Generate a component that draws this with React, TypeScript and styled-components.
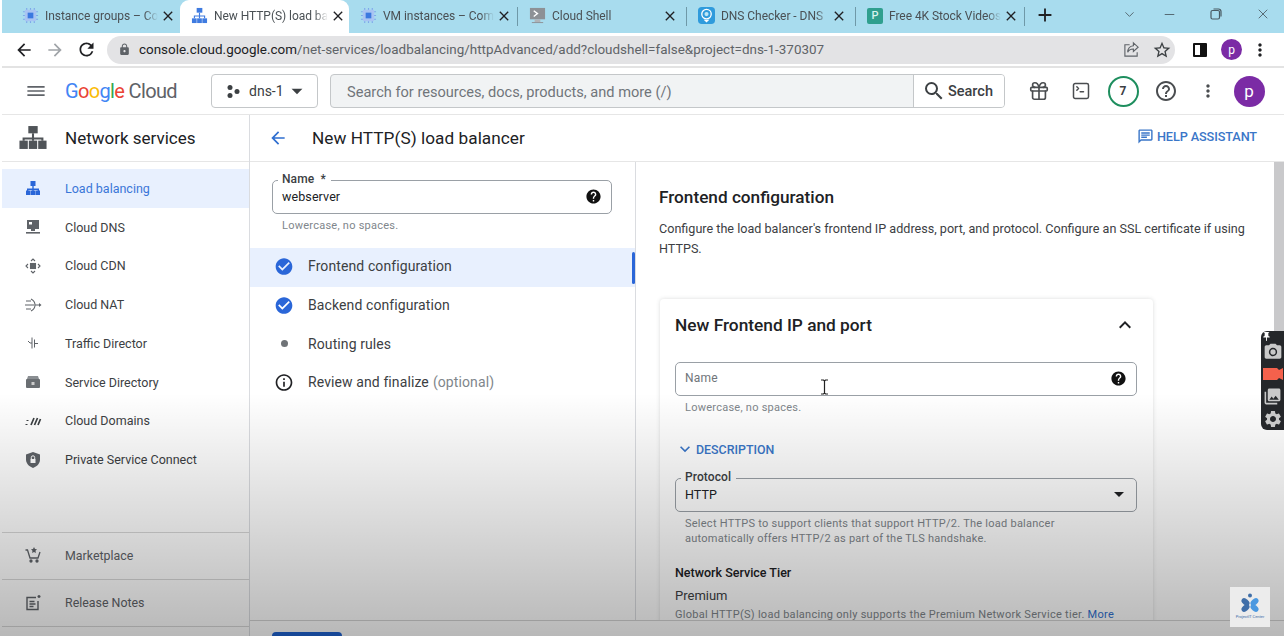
import { ReactNode } from "react";
import styled, { createGlobalStyle } from "styled-components";
import {
  MdMenu,
  MdArrowBack,
  MdArrowForward,
  MdRefresh,
  MdLock,
  MdStarBorder,
  MdMoreVert,
  MdSearch,
  MdHelpOutline,
  MdHelp,
  MdCheckCircle,
  MdInfoOutline,
  MdExpandLess,
  MdExpandMore,
  MdArrowDropDown,
  MdOutlineChat,
  MdClose,
  MdAdd,
  MdPushPin,
  MdCameraAlt,
  MdPhotoLibrary,
  MdSettings,
} from "react-icons/md";
import { Gift, SquareTerminal, ChevronDown, Minus, X } from "lucide-react";

const GlobalStyle = createGlobalStyle`
  html, body {
    margin: 0;
    padding: 0;
    background: #fff;
    font-family: Roboto, "Liberation Sans", sans-serif;
    overflow: hidden;
  }
  * { box-sizing: border-box; }
`;

const Page = styled.div`
  position: relative;
  width: 1284px;
  height: 636px;
  padding-left: 2px;
  overflow: hidden;
  background: #fff;
  color: #202124;
`;

const TabStrip = styled.div`
  display: flex;
  align-items: flex-end;
  height: 33px;
  padding-left: 9px;
  background: #a8dcee;
  color: #4a5054;
`;

const Tab = styled.div<{ $active?: boolean; $sep?: boolean }>`
  position: relative;
  display: flex;
  align-items: center;
  width: 169px;
  height: 33px;
  padding: 0 9px 2px 11px;
  background: ${(p) => (p.$active ? "#fff" : "transparent")};
  border-radius: 9px 9px 0 0;
  &::after {
    content: "";
    display: ${(p) => (p.$sep ? "block" : "none")};
    position: absolute;
    right: 0;
    top: 7px;
    height: 19px;
    width: 1px;
    background: #6f99a8;
  }
`;

const TabFavicon = styled.svg`
  flex: none;
  width: 17px;
  height: 17px;
`;

const TabTitle = styled.span`
  flex: 1;
  margin-left: 6px;
  font-size: 12px;
  letter-spacing: -0.05px;
  white-space: nowrap;
  -webkit-mask-image: linear-gradient(90deg, #000 88%, transparent 100%);
  mask-image: linear-gradient(90deg, #000 88%, transparent 100%);
`;

const TabClose = styled(MdClose)`
  flex: none;
  margin-left: 2px;
  width: 16px;
  height: 16px;
  color: #202124;
`;

const NewTab = styled(MdAdd)`
  margin: 0 0 3px 9px;
  width: 22px;
  height: 22px;
  color: #202124;
  flex: none;
  align-self: center;
`;

const WindowControls = styled.div`
  display: flex;
  align-items: center;
  gap: 33px;
  margin-left: auto;
  margin-right: 13px;
  align-self: flex-start;
  height: 28px;
  color: #4a5a62;
`;

const ChevronControl = styled(ChevronDown)`
  margin-right: -8px;
`;

const RestoreIcon = styled.svg`
  width: 12px;
  height: 12px;
`;

const Toolbar = styled.div`
  display: flex;
  align-items: center;
  height: 35px;
  padding-left: 12px;
  border-bottom: 2px solid #e3e3e3;
  background: #fff;
`;

const NavButtons = styled.div`
  display: flex;
  align-items: center;
  gap: 11px;
  width: 93px;
  flex: none;
  color: #3c4043;
`;

const UrlBar = styled.div`
  display: flex;
  align-items: center;
  flex: none;
  width: 1068px;
  height: 28px;
  padding: 0 3px 0 11px;
  background: #e3e3e5;
  border-radius: 14px;
  color: #5f6368;
`;

const UrlText = styled.span`
  margin-left: 8px;
  font-size: 13.45px;
  color: #5f6368;
  white-space: nowrap;
  b {
    font-weight: 400;
    color: #202124;
  }
`;

const UrlActions = styled.div`
  display: flex;
  align-items: center;
  gap: 12px;
  margin-left: auto;
`;

const ShareIcon = styled.svg`
  width: 17px;
  height: 17px;
`;

const BrowserRight = styled.div`
  display: flex;
  align-items: center;
  gap: 14px;
  margin-left: 18px;
`;

const SidePanelIcon = styled.span`
  display: block;
  width: 14px;
  height: 14px;
  border: 2px solid #111;
  border-right-width: 7px;
  border-radius: 1px;
`;

const MiniAvatar = styled.span`
  display: flex;
  align-items: center;
  justify-content: center;
  width: 21px;
  height: 21px;
  border-radius: 50%;
  background: #7b2ba5;
  color: #fff;
  font-size: 12px;
`;

const BrowserMenu = styled(MdMoreVert)`
  margin-left: -6px;
  color: #202124;
`;

const AppHeader = styled.div`
  display: flex;
  align-items: center;
  height: 47px;
  padding-left: 24px;
  border-bottom: 1px solid #e6e6e6;
`;

const Burger = styled(MdMenu)`
  flex: none;
  width: 20px;
  height: 20px;
  color: #5f6368;
  transform: scaleX(1.15);
`;

const Logo = styled.div`
  display: flex;
  flex: none;
  width: 146px;
  margin-left: 19px;
  font-size: 20px;
  letter-spacing: -0.65px;
  white-space: nowrap;
  color: #5f6368;
`;

const LogoLetter = styled.span<{ $color: string }>`
  color: ${(p) => p.$color};
`;

const ProjectPicker = styled.div`
  display: flex;
  align-items: center;
  flex: none;
  width: 107px;
  height: 34px;
  padding-left: 14px;
  border: 1px solid #c4c7c9;
  border-radius: 4px;
  font-size: 14px;
  color: #3c4043;
`;

const PickerLabel = styled.span`
  margin-left: 8px;
`;

const PickerDots = styled.svg`
  width: 15px;
  height: 15px;
`;

const SearchBox = styled.div`
  display: flex;
  flex: none;
  width: 675px;
  height: 34px;
  margin-left: 12px;
  border: 1px solid #c4c7c9;
  border-radius: 4px;
  background: #f1f3f4;
  overflow: hidden;
`;

const SearchPlaceholder = styled.div`
  flex: 1;
  padding: 1px 0 0 16px;
  font-size: 14.6px;
  line-height: 32px;
  color: #70757a;
`;

const SearchButton = styled.div`
  display: flex;
  align-items: center;
  gap: 2px;
  width: 91px;
  padding-left: 8px;
  background: #fff;
  border-left: 1px solid #c4c7c9;
  font-size: 14.5px;
  font-weight: 500;
  color: #3c4043;
`;

const HeaderIcons = styled.div`
  display: flex;
  align-items: center;
  margin-left: 23px;
  color: #4a4d50;
`;

const IconSlot = styled.div<{ $w: number }>`
  display: flex;
  align-items: center;
  justify-content: center;
  width: ${(p) => p.$w}px;
`;

const Badge = styled.div`
  display: flex;
  flex: none;
  align-items: center;
  justify-content: center;
  width: 31px;
  height: 31px;
  border: 2px solid #1e8e5e;
  border-radius: 50%;
  font-size: 12px;
  font-weight: 700;
  color: #3c4043;
`;

const Avatar = styled.div`
  display: flex;
  align-items: center;
  justify-content: center;
  width: 31px;
  height: 31px;
  border-radius: 50%;
  background: #7b2ba5;
  color: #fff;
  font-size: 17px;
`;

const Body = styled.div`
  display: flex;
  height: 521px;
`;

const Sidebar = styled.aside`
  display: flex;
  flex-direction: column;
  flex: none;
  width: 248px;
  border-right: 1px solid #dadce0;
`;

const SideTitle = styled.div`
  display: flex;
  align-items: center;
  flex: none;
  height: 47px;
  padding: 0 0 1px 17px;
  border-bottom: 1px solid #e6e6e6;
  font-size: 17px;
  color: #202124;
`;

const TitleIcon = styled.svg`
  flex: none;
  width: 28px;
  height: 25px;
  margin-right: 18px;
`;

const SideList = styled.nav`
  padding-top: 7px;
`;

const SideRow = styled.div<{ $active?: boolean }>`
  display: flex;
  align-items: center;
  height: 38.75px;
  padding-left: 22px;
  font-size: 12.5px;
  background: ${(p) => (p.$active ? "#e8f0fe" : "transparent")};
  color: ${(p) => (p.$active ? "#3a76d8" : "#3c4043")};
`;

const SideIcon = styled.svg`
  flex: none;
  width: 18px;
  height: 18px;
  margin-right: 23px;
`;

const SideBottom = styled.div`
  margin-top: auto;
  padding-bottom: 9px;
`;

const BottomRow = styled.div`
  display: flex;
  align-items: center;
  height: 47.5px;
  padding: 0 0 1px 22px;
  border-top: 1px solid #d8d8d8;
  font-size: 12.4px;
  color: #5f6368;
  &:last-child {
    height: 48px;
    border-bottom: 1px solid #d8d8d8;
  }
`;

const Main = styled.main`
  display: flex;
  flex-direction: column;
  flex: 1;
  min-width: 0;
`;

const MainHeader = styled.div`
  display: flex;
  align-items: center;
  flex: none;
  height: 47px;
  padding: 0 27px 1px 18px;
  border-bottom: 1px solid #e6e6e6;
`;

const BackArrow = styled(MdArrowBack)`
  width: 20px;
  height: 20px;
  color: #2f6fd0;
`;

const PageTitle = styled.h1`
  margin: 0 0 0 24px;
  font-size: 17.2px;
  font-weight: 400;
  letter-spacing: 0.05px;
`;

const HelpAssistant = styled.div`
  display: flex;
  align-items: center;
  gap: 3px;
  margin: 0 0 2px auto;
  font-size: 12.7px;
  font-weight: 500;
  letter-spacing: -0.1px;
  color: #3a76c8;
`;

const Columns = styled.div`
  display: flex;
  flex: 1;
  min-height: 0;
  overflow: hidden;
`;

const StepPanel = styled.section`
  flex: none;
  width: 386px;
  padding-top: 18px;
  border-right: 1px solid #dadce0;
`;

const FieldWrap = styled.div<{ $inset?: boolean }>`
  margin: ${(p) => (p.$inset ? "0 22px" : "0")};
  width: ${(p) => (p.$inset ? "340px" : "462px")};
`;

const Field = styled.div`
  position: relative;
  display: flex;
  align-items: center;
  justify-content: space-between;
  height: 34px;
  padding: 0 9px 2px;
  border: 1px solid #9aa0a6;
  border-radius: 5px;
  font-size: 12.5px;
  color: #202124;
  letter-spacing: 0.1px;
`;

const FieldLabel = styled.span`
  position: absolute;
  left: 5px;
  top: -8px;
  padding: 0 5px 0 4px;
  background: #fff;
  font-size: 12px;
  line-height: 13px;
  font-weight: 500;
  color: #3c4043;
`;

const Placeholder = styled.span`
  font-size: 12px;
  color: #70757a;
  letter-spacing: 0.2px;
`;

const HintText = styled.div`
  margin-top: 4px;
  padding-left: 10px;
  font-size: 11px;
  line-height: 15px;
  letter-spacing: 0.25px;
  color: #80868b;
`;

const Steps = styled.div`
  margin-top: 15px;
`;

const StepRow = styled.div<{ $active?: boolean }>`
  position: relative;
  display: flex;
  align-items: center;
  height: 38.7px;
  padding: 0 0 2px 24px;
  font-size: 14px;
  letter-spacing: 0.1px;
  color: #3c4043;
  background: ${(p) => (p.$active ? "#e8f0fe" : "transparent")};
  &::after {
    content: "";
    display: ${(p) => (p.$active ? "block" : "none")};
    position: absolute;
    right: 0;
    top: 4px;
    width: 3px;
    height: 32px;
    border-radius: 2px;
    background: #2a66d8;
  }
`;

const StepIconBox = styled.span`
  display: flex;
  align-items: center;
  justify-content: center;
  flex: none;
  width: 20px;
  margin-right: 14px;
`;

const StepCheck = styled(MdCheckCircle)`
  width: 23px;
  height: 23px;
  color: #2a66d8;
`;

const StepInfo = styled(MdInfoOutline)`
  width: 23px;
  height: 23px;
  color: #202124;
`;

const StepDot = styled.span`
  width: 7px;
  height: 7px;
  border-radius: 50%;
  background: #6f7377;
`;

const Optional = styled.span`
  margin-left: 4px;
  color: #80868b;
`;

const ConfigPanel = styled.section`
  flex: 1;
  padding: 25px 0 0 23px;
`;

const ConfigTitle = styled.h2`
  margin: 0;
  font-size: 17.2px;
  line-height: 20px;
  font-weight: 500;
  color: #202124;
`;

const ConfigText = styled.p`
  width: 600px;
  margin: 12px 0 0;
  font-size: 12.6px;
  line-height: 20px;
  color: #3c4043;
`;

const Card = styled.div`
  width: 493px;
  height: 340px;
  margin: 40px 0 0 1px;
  padding: 0 15px;
  background: #fff;
  border-radius: 4px 4px 0 0;
  box-shadow: 0 0 4px rgba(60, 64, 67, 0.18);
`;

const CardHead = styled.div`
  display: flex;
  align-items: center;
  justify-content: space-between;
  height: 53px;
  margin-bottom: 10px;
  padding: 0 1px 1px 0;
`;

const CardTitle = styled.h3`
  margin: 0;
  font-size: 17.3px;
  font-weight: 500;
  color: #202124;
`;

const CardToggle = styled(MdExpandLess)`
  width: 24px;
  height: 24px;
  color: #202124;
`;

const Disclosure = styled.div`
  display: flex;
  align-items: center;
  gap: 1px;
  margin: 25px 0 0;
  height: 18px;
  font-size: 12.4px;
  font-weight: 500;
  color: #3a76c8;
`;

const FieldGap = styled.div`
  height: 20px;
`;

const DropCaret = styled(MdArrowDropDown)`
  width: 24px;
  height: 24px;
  margin-right: -4px;
  color: #202124;
`;

const TierTitle = styled.div`
  margin-top: 19px;
  font-size: 12.5px;
  line-height: 16px;
  font-weight: 500;
  color: #202124;
`;

const TierValue = styled.div`
  margin-top: 7px;
  font-size: 13px;
  line-height: 16px;
  color: #3c4043;
`;

const TierHint = styled.div`
  margin-top: 5px;
  font-size: 11px;
  line-height: 12px;
  letter-spacing: 0.28px;
  white-space: nowrap;
  color: #80868b;
`;

const MoreLink = styled.span`
  color: #2f6fd0;
`;

const ActionBar = styled.div`
  flex: none;
  height: 16px;
  padding: 11px 0 0 22px;
  border-top: 1px solid #d4d4d4;
  background: #fff;
`;

const SaveButton = styled.div`
  width: 70px;
  height: 20px;
  border-radius: 4px;
  background: #1f62d0;
`;

// Things that float over the page: the video fade, capture widget, watermark, cursor
const VideoFade = styled.div`
  position: absolute;
  left: 0;
  right: 0;
  bottom: 0;
  height: 243px;
  background: linear-gradient(rgba(0, 0, 0, 0), rgba(0, 0, 0, 0.28));
  pointer-events: none;
`;

const ScrollThumb = styled.div`
  position: absolute;
  right: 0;
  top: 162px;
  width: 10px;
  height: 170px;
  background: #c9c9cb;
`;

const CaptureWidget = styled.div`
  position: absolute;
  right: 0;
  top: 331px;
  display: flex;
  flex-direction: column;
  align-items: center;
  width: 23px;
  height: 99px;
  background: #25272a;
  border-radius: 6px 0 0 6px;
  color: #c9c9c9;
`;

const PinBadge = styled(MdPushPin)`
  align-self: flex-start;
  width: 11px;
  height: 11px;
  color: #fff;
`;

const CameraGlyph = styled(MdCameraAlt)`
  width: 20px;
  height: 20px;
`;

const RedCam = styled.svg`
  width: 20px;
  height: 12px;
  margin: 6px 0 7px;
`;

const GalleryGlyph = styled(MdPhotoLibrary)`
  width: 19px;
  height: 19px;
`;

const GearGlyph = styled(MdSettings)`
  width: 20px;
  height: 20px;
  margin-top: 3px;
`;

const CursorBeam = styled.svg`
  position: absolute;
  left: 820px;
  top: 379px;
  width: 9px;
  height: 16px;
`;

const Watermark = styled.div`
  position: absolute;
  left: 1230px;
  top: 587px;
  display: flex;
  flex-direction: column;
  align-items: center;
  width: 40px;
  height: 40px;
  padding-top: 6px;
  background: #ececec;
`;

const WatermarkMark = styled.svg`
  width: 20px;
  height: 21px;
`;

const WatermarkText = styled.span`
  font-size: 4px;
  line-height: 5px;
  white-space: nowrap;
  color: #3f6ea8;
`;

const PexelsFavicon = styled.span`
  display: flex;
  align-items: center;
  justify-content: center;
  flex: none;
  width: 16px;
  height: 16px;
  border-radius: 2px;
  background: #2f9f8e;
  color: #d8f3ee;
  font-size: 11px;
  font-weight: 500;
`;

function ChipIcon() {
  return (
    <TabFavicon viewBox="0 0 18 18">
      <g stroke="#7da7ea" strokeWidth="1.2">
        <path d="M5 1v16M9 1v16M13 1v16M1 5h16M1 9h16M1 13h16" />
      </g>
      <rect x="3" y="3" width="12" height="12" rx="1.5" fill="#a9c4f2" />
      <rect x="6" y="6" width="6" height="6" fill="#3b78e0" />
    </TabFavicon>
  );
}

function NetworkFavicon() {
  return (
    <TabFavicon viewBox="0 0 18 18" fill="#3f7be0">
      <rect x="6" y="1" width="6" height="5" />
      <path d="M8.4 6h1.2v3H15v3h-1.2v-2H9.6v2H8.4v-2H4.2v2H3V9h5.4z" />
      <rect x="1" y="12" width="5" height="5" />
      <rect x="6.5" y="12" width="5" height="5" />
      <rect x="12" y="12" width="5" height="5" />
    </TabFavicon>
  );
}

function ShellFavicon() {
  return (
    <TabFavicon viewBox="0 0 18 18">
      <rect x="1" y="1" width="16" height="12" fill="#8d9196" />
      <rect x="6" y="13" width="6" height="3" fill="#b0b4b8" />
      <rect x="3" y="16" width="12" height="1" fill="#8d9196" />
      <path d="M5 4l4 3-4 3" fill="none" stroke="#fff" strokeWidth="1.4" />
    </TabFavicon>
  );
}

function DnsFavicon() {
  return (
    <TabFavicon viewBox="0 0 18 18">
      <rect width="18" height="18" rx="4" fill="#2f9bdc" />
      <circle cx="9" cy="7.5" r="5" fill="none" stroke="#fff" strokeWidth="1.4" />
      <circle cx="9" cy="7.5" r="2.2" fill="#bfe6f5" />
      <path d="M6 13.5h6l-3 3z" fill="#fff" />
    </TabFavicon>
  );
}

type SideItem = { label: string; icon: ReactNode; active?: boolean };

const sideItems: SideItem[] = [
  {
    label: "Load balancing",
    active: true,
    icon: (
      <g fill="#2a66d8">
        <rect x="6.5" y="2" width="5" height="5" />
        <path d="M8.3 7h1.4v2.5H15V12h-1.4v-1.1H9.7V12H8.3v-1.1H4.4V12H3V9.5h5.3z" />
        <rect x="2" y="11.5" width="4.5" height="4.5" />
        <rect x="6.8" y="11.5" width="4.5" height="4.5" />
        <rect x="11.5" y="11.5" width="4.5" height="4.5" />
      </g>
    ),
  },
  {
    label: "Cloud DNS",
    icon: (
      <g fill="#5f6368">
        <rect x="3" y="2" width="12" height="9" />
        <rect x="7" y="11" width="4" height="2" />
        <rect x="2" y="14" width="14" height="1.6" />
        <rect x="5" y="4" width="3" height="2.5" fill="#fff" />
      </g>
    ),
  },
  {
    label: "Cloud CDN",
    icon: (
      <g fill="none" stroke="#5f6368" strokeWidth="1.1">
        <rect x="6.5" y="6.5" width="5" height="5" fill="#5f6368" />
        <path d="M4 7L2 9l2 2M14 7l2 2-2 2M7 4l2-2 2 2M7 14l2 2 2-2" />
      </g>
    ),
  },
  {
    label: "Cloud NAT",
    icon: (
      <g fill="none" stroke="#5f6368" strokeWidth="1.1">
        <path d="M2 5h5M1 9h9M2 13h5M7 3c3 1.5 4 3.5 4 6s-1 4.5-4 6M11 9h4" />
        <path d="M15 7l2.5 2-2.5 2z" fill="#5f6368" stroke="none" />
      </g>
    ),
  },
  {
    label: "Traffic Director",
    icon: (
      <g fill="none" stroke="#5f6368" strokeWidth="1">
        <path d="M8 3.5v11M10.5 5.5v8M4 7l2 2h2M10.5 9.500H14" />
      </g>
    ),
  },
  {
    label: "Service Directory",
    icon: (
      <g fill="#6a6e72">
        <path d="M4 3h10l1 3H3z" fill="#8a8e92" />
        <rect x="2" y="6" width="14" height="9" rx="1" />
        <rect x="7.5" y="9" width="3" height="3" fill="#ccc" />
      </g>
    ),
  },
  {
    label: "Cloud Domains",
    icon: (
      <g fill="none" stroke="#3c4043" strokeWidth="1.7">
        <path d="M7 13l3-7M10.5 13l3-7M14 13l2.5-6" />
        <path d="M3.5 8v1M2.5 12v1" strokeWidth="2" />
      </g>
    ),
  },
  {
    label: "Private Service Connect",
    icon: (
      <g>
        <path d="M9 1l7 2.5v5c0 4-3 7-7 8.5-4-1.5-7-4.5-7-8.5v-5z" fill="#5f6368" />
        <rect x="6.5" y="8" width="5" height="4" fill="#fff" />
        <path d="M7.3 8V6.5a1.7 1.7 0 013.4 0V8" fill="none" stroke="#fff" />
      </g>
    ),
  },
];

const tabs: { title: string; icon: ReactNode; active?: boolean; sep?: boolean }[] = [
  { title: "Instance groups – Co", icon: <ChipIcon /> },
  { title: "New HTTP(S) load ba", icon: <NetworkFavicon />, active: true },
  { title: "VM instances – Com", icon: <ChipIcon />, sep: true },
  { title: "Cloud Shell", icon: <ShellFavicon />, sep: true },
  { title: "DNS Checker - DNS", icon: <DnsFavicon />, sep: true },
  { title: "Free 4K Stock Videos", icon: <PexelsFavicon>P</PexelsFavicon>, sep: true },
];

const logoLetters: [string, string][] = [
  ["G", "#4285f4"],
  ["o", "#ea4335"],
  ["o", "#fbbc05"],
  ["g", "#4285f4"],
  ["l", "#34a853"],
  ["e", "#ea4335"],
];

export default function App() {
  return (
    <Page>
      <GlobalStyle />
      <TabStrip>
        {tabs.map((tab) => (
          <Tab key={tab.title} $active={tab.active} $sep={tab.sep}>
            {tab.icon}
            <TabTitle>{tab.title}</TabTitle>
            <TabClose />
          </Tab>
        ))}
        <NewTab />
        <WindowControls>
          <ChevronControl size={15} strokeWidth={1.4} />
          <Minus size={15} strokeWidth={1.4} />
          <RestoreIcon viewBox="0 0 12 12" fill="none" stroke="currentColor" strokeWidth="1.2">
            <rect x="1" y="2.5" width="8.5" height="8.5" rx="1.5" />
            <path d="M3.5 1h5A2.5 2.5 0 0111 3.5v5" />
          </RestoreIcon>
          <X size={16} strokeWidth={1.3} />
        </WindowControls>
      </TabStrip>

      <Toolbar>
        <NavButtons>
          <MdArrowBack size={20} color="#202124" />
          <MdArrowForward size={20} color="#a0a4a8" />
          <MdRefresh size={21} color="#202124" />
        </NavButtons>
        <UrlBar>
          <MdLock size={13} color="#5f6368" />
          <UrlText>
            <b>console.cloud.google.com</b>
            /net-services/loadbalancing/httpAdvanced/add?cloudshell=false&amp;project=dns-1-370307
          </UrlText>
          <UrlActions>
            <ShareIcon viewBox="0 0 18 18" fill="none" stroke="#5f6368" strokeWidth="1.2">
              <path d="M7 4H2v12h13v-4" />
              <path d="M11 2l5 4.5-5 4.5V8.5c-3 0-5 1-6 3.5 0-4 2-6.5 6-7z" />
            </ShareIcon>
            <MdStarBorder size={20} color="#3c4043" />
          </UrlActions>
        </UrlBar>
        <BrowserRight>
          <SidePanelIcon />
          <MiniAvatar>p</MiniAvatar>
          <BrowserMenu size={20} />
        </BrowserRight>
      </Toolbar>

      <AppHeader>
        <Burger />
        <Logo>
          {logoLetters.map(([letter, color], i) => (
            <LogoLetter key={i} $color={color}>
              {letter}
            </LogoLetter>
          ))}
          &nbsp;Cloud
        </Logo>
        <ProjectPicker>
          <PickerDots viewBox="0 0 15 15" fill="#3c4043">
            <circle cx="4" cy="3.5" r="2.5" />
            <circle cx="4" cy="11.5" r="2.5" />
            <circle cx="11" cy="7.5" r="2.5" />
          </PickerDots>
          <PickerLabel>dns-1</PickerLabel>
          <MdArrowDropDown size={26} color="#3c4043" />
        </ProjectPicker>
        <SearchBox>
          <SearchPlaceholder>Search for resources, docs, products, and more (/)</SearchPlaceholder>
          <SearchButton>
            <MdSearch size={24} />
            Search
          </SearchButton>
        </SearchBox>
        <HeaderIcons>
          <IconSlot $w={22}>
            <Gift size={24} strokeWidth={1.8} />
          </IconSlot>
          <IconSlot $w={62}>
            <SquareTerminal size={20} strokeWidth={1.8} />
          </IconSlot>
          <IconSlot $w={22}>
            <Badge>7</Badge>
          </IconSlot>
          <IconSlot $w={64}>
            <MdHelpOutline size={24} />
          </IconSlot>
          <IconSlot $w={20}>
            <MdMoreVert size={22} />
          </IconSlot>
          <IconSlot $w={62}>
            <Avatar>p</Avatar>
          </IconSlot>
        </HeaderIcons>
      </AppHeader>

      <Body>
        <Sidebar>
          <SideTitle>
            <TitleIcon viewBox="0 0 26 24" fill="#505458">
              <rect x="8.5" y="1" width="9" height="7" />
              <path d="M12 8h2v4h9v3h-2v-1h-7v1h-2v-1H5v1H3v-3h9z" />
              <rect x="0" y="15" width="8" height="8" />
              <rect x="9" y="15" width="8" height="8" />
              <rect x="18" y="15" width="8" height="8" />
            </TitleIcon>
            Network services
          </SideTitle>
          <SideList>
            {sideItems.map((item) => (
              <SideRow key={item.label} $active={item.active}>
                <SideIcon viewBox="0 0 18 18">{item.icon}</SideIcon>
                {item.label}
              </SideRow>
            ))}
          </SideList>
          <SideBottom>
            <BottomRow>
              <SideIcon viewBox="0 0 18 18" fill="none" stroke="#5f6368" strokeWidth="1.3">
                <path d="M1.5 4h2L6 12h8l2-6" />
                <circle cx="7" cy="15" r="1" fill="#5f6368" />
                <circle cx="13" cy="15" r="1" fill="#5f6368" />
                <path d="M10 1l1 2 2 .3-1.5 1.5.4 2.2-1.9-1-1.9 1 .4-2.2L7 3.3 9 3z" fill="#5f6368" stroke="none" />
              </SideIcon>
              Marketplace
            </BottomRow>
            <BottomRow>
              <SideIcon viewBox="0 0 18 18" fill="none" stroke="#5f6368" strokeWidth="1.4">
                <path d="M12 3.5H3v12h11V7" />
                <path d="M5.5 7.5h5M5.5 10h6M5.5 12.5h4" />
                <path d="M15 1v3M13.5 2.5h3" />
              </SideIcon>
              Release Notes
            </BottomRow>
          </SideBottom>
        </Sidebar>

        <Main>
          <MainHeader>
            <BackArrow />
            <PageTitle>New HTTP(S) load balancer</PageTitle>
            <HelpAssistant>
              <MdOutlineChat size={17} />
              HELP ASSISTANT
            </HelpAssistant>
          </MainHeader>
          <Columns>
            <StepPanel>
              <FieldWrap $inset>
                <Field>
                  <FieldLabel>Name &nbsp;*</FieldLabel>
                  webserver
                  <MdHelp size={17} color="#111" />
                </Field>
                <HintText>Lowercase, no spaces.</HintText>
              </FieldWrap>
              <Steps>
                <StepRow $active>
                  <StepIconBox>
                    <StepCheck />
                  </StepIconBox>
                  Frontend configuration
                </StepRow>
                <StepRow>
                  <StepIconBox>
                    <StepCheck />
                  </StepIconBox>
                  Backend configuration
                </StepRow>
                <StepRow>
                  <StepIconBox>
                    <StepDot />
                  </StepIconBox>
                  Routing rules
                </StepRow>
                <StepRow>
                  <StepIconBox>
                    <StepInfo />
                  </StepIconBox>
                  Review and finalize
                  <Optional>(optional)</Optional>
                </StepRow>
              </Steps>
            </StepPanel>
            <ConfigPanel>
              <ConfigTitle>Frontend configuration</ConfigTitle>
              <ConfigText>
                Configure the load balancer's frontend IP address, port, and protocol. Configure an
                SSL certificate if using HTTPS.
              </ConfigText>
              <Card>
                <CardHead>
                  <CardTitle>New Frontend IP and port</CardTitle>
                  <CardToggle />
                </CardHead>
                <FieldWrap>
                  <Field>
                    <Placeholder>Name</Placeholder>
                    <MdHelp size={17} color="#111" />
                  </Field>
                  <HintText>Lowercase, no spaces.</HintText>
                </FieldWrap>
                <Disclosure>
                  <MdExpandMore size={20} />
                  DESCRIPTION
                </Disclosure>
                <FieldGap />
                <FieldWrap>
                  <Field>
                    <FieldLabel>Protocol</FieldLabel>
                    HTTP
                    <DropCaret />
                  </Field>
                  <HintText>
                    Select HTTPS to support clients that support HTTP/2. The load balancer
                    <br />
                    automatically offers HTTP/2 as part of the TLS handshake.
                  </HintText>
                </FieldWrap>
                <TierTitle>Network Service Tier</TierTitle>
                <TierValue>Premium</TierValue>
                <TierHint>
                  Global HTTP(S) load balancing only supports the Premium Network Service tier.{" "}
                  <MoreLink>More</MoreLink>
                </TierHint>
              </Card>
            </ConfigPanel>
          </Columns>
          <ActionBar>
            <SaveButton />
          </ActionBar>
        </Main>
      </Body>

      <VideoFade />
      <ScrollThumb />
      <CaptureWidget>
        <PinBadge />
        <CameraGlyph />
        <RedCam viewBox="0 0 20 12" fill="#f4614c">
          <path d="M0 0h14l2 2 4-2v12l-4-2-2 2H0z" />
        </RedCam>
        <GalleryGlyph />
        <GearGlyph />
      </CaptureWidget>
      <CursorBeam viewBox="0 0 9 16" fill="none" stroke="#222" strokeWidth="1.2">
        <path d="M1 1h2.5l1 1 1-1H8M4.5 2v12M1 15h2.500l1-1 1 1H8" />
      </CursorBeam>
      <Watermark>
        <WatermarkMark viewBox="0 0 20 21">
          <circle cx="10" cy="2.5" r="2" fill="#3f6ea8" />
          <ellipse cx="5.5" cy="9" rx="4.5" ry="3" transform="rotate(40 5.5 9)" fill="#3f6ea8" />
          <ellipse cx="5.5" cy="15" rx="4.5" ry="3" transform="rotate(-40 5.5 15)" fill="#3f6ea8" />
          <ellipse cx="14.5" cy="9" rx="4.5" ry="3" transform="rotate(-40 14.5 9)" fill="#4a98e0" />
          <ellipse cx="14.5" cy="15" rx="4.5" ry="3" transform="rotate(40 14.5 15)" fill="#4a98e0" />
        </WatermarkMark>
        <WatermarkText>ProjectIT Center</WatermarkText>
      </Watermark>
    </Page>
  );
}
